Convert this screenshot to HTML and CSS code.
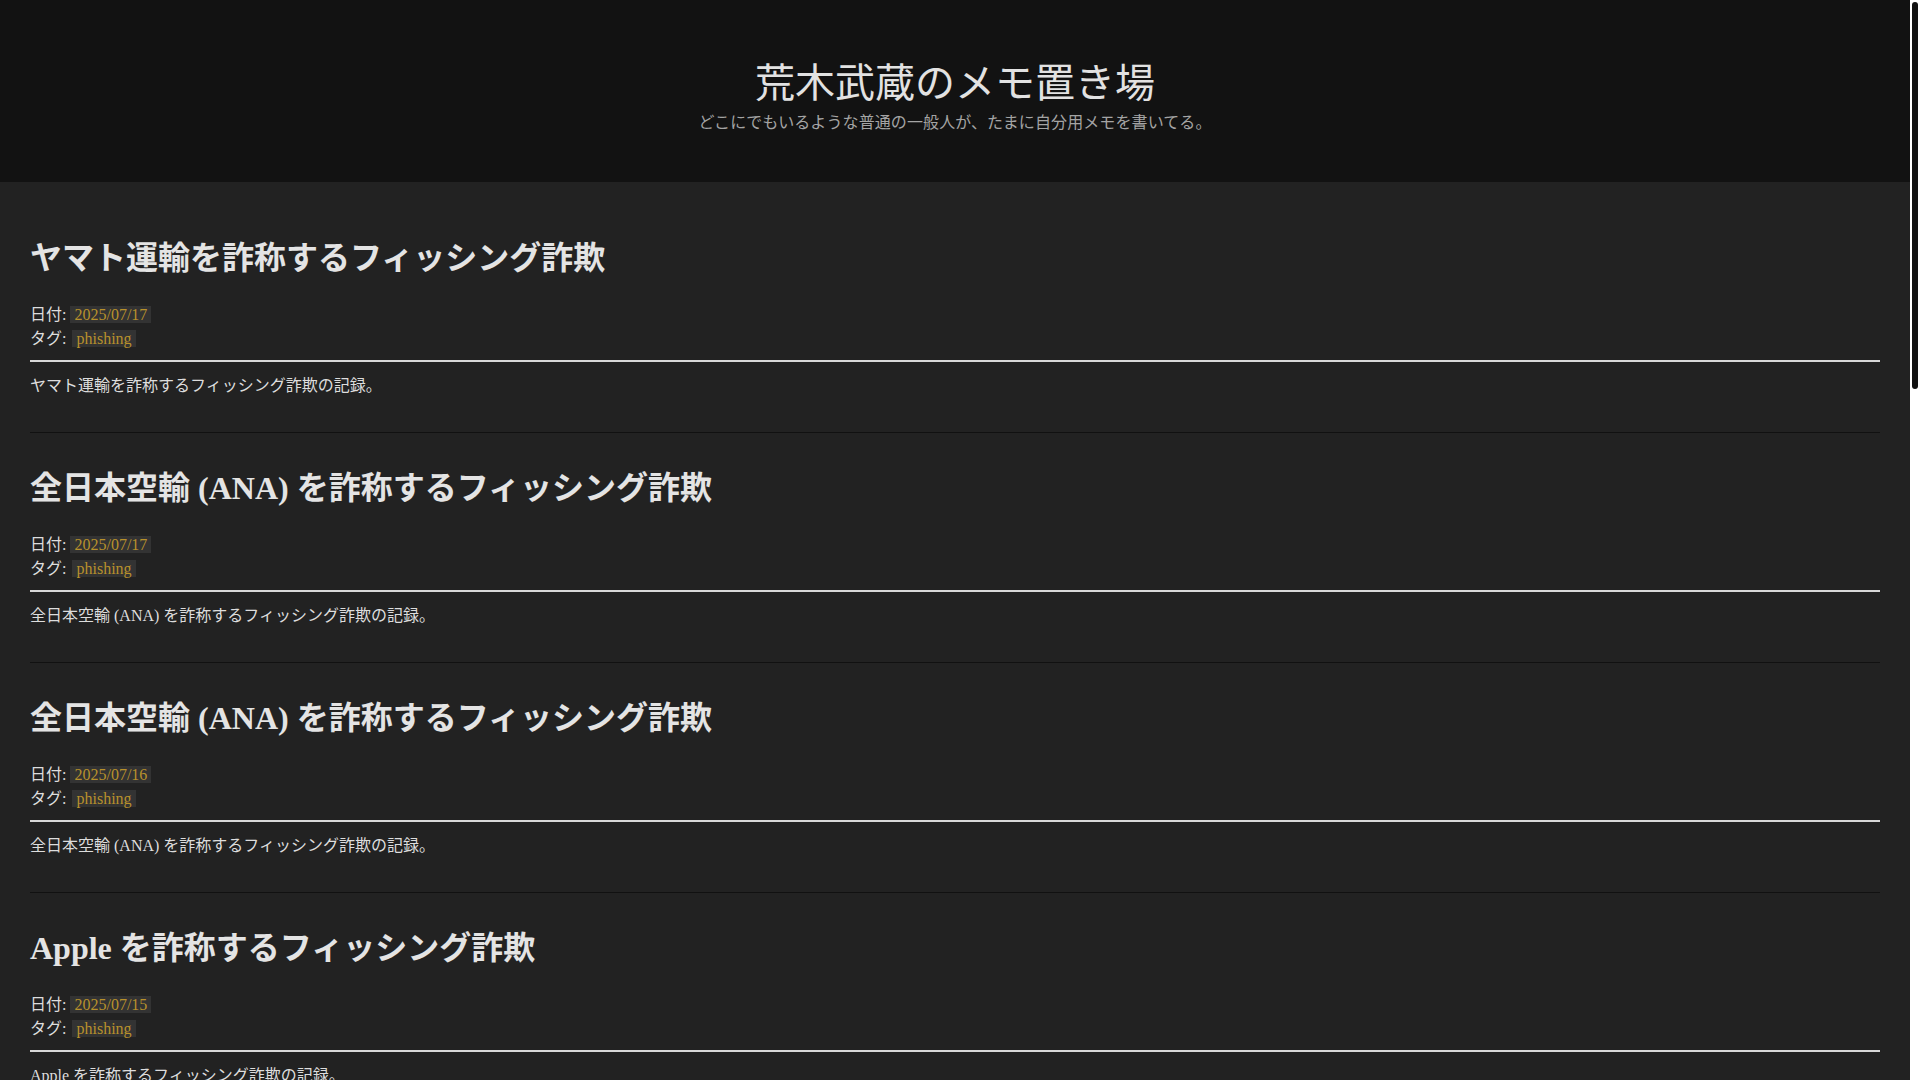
FILE: index.html
```html
<!DOCTYPE html>
<html lang="ja">
<head>
  <meta charset="UTF-8" />
  <meta name="viewport" content="width=device-width, initial-scale=1.0" />
  <title>荒木武蔵のメモ置き場</title>
  <link rel="stylesheet" href="styles.css">
</head>
<body>
  <div class="page">
    <header class="site-header">
      <h1 class="site-title">荒木武蔵のメモ置き場</h1>
      <p class="site-desc">どこにでもいるような普通の一般人が、たまに自分用メモを書いてる。</p>
    </header>

    <main class="posts">
      <article class="post">
        <h2 class="post-title">ヤマト運輸を詐称するフィッシング詐欺</h2>
        <div class="post-meta">
          <div>日付: <span class="code">2025/07/17</span></div>
          <div>タグ: <a class="code tag">phishing</a></div>
        </div>
        <hr>
        <p>ヤマト運輸を詐称するフィッシング詐欺の記録。</p>
      </article>

      <article class="post">
        <h2 class="post-title">全日本空輸 (ANA) を詐称するフィッシング詐欺</h2>
        <div class="post-meta">
          <div>日付: <span class="code">2025/07/17</span></div>
          <div>タグ: <a class="code tag">phishing</a></div>
        </div>
        <hr>
        <p>全日本空輸 (ANA) を詐称するフィッシング詐欺の記録。</p>
      </article>

      <article class="post">
        <h2 class="post-title">全日本空輸 (ANA) を詐称するフィッシング詐欺</h2>
        <div class="post-meta">
          <div>日付: <span class="code">2025/07/16</span></div>
          <div>タグ: <a class="code tag">phishing</a></div>
        </div>
        <hr>
        <p>全日本空輸 (ANA) を詐称するフィッシング詐欺の記録。</p>
      </article>

      <article class="post">
        <h2 class="post-title">Apple を詐称するフィッシング詐欺</h2>
        <div class="post-meta">
          <div>日付: <span class="code">2025/07/15</span></div>
          <div>タグ: <a class="code tag">phishing</a></div>
        </div>
        <hr>
        <p>Apple を詐称するフィッシング詐欺の記録。</p>
      </article>

      <article class="post">
        <h2 class="post-title">Amazon を詐称するフィッシング詐欺</h2>
        <div class="post-meta">
          <div>日付: <span class="code">2025/07/14</span></div>
          <div>タグ: <a class="code tag">phishing</a></div>
        </div>
        <hr>
        <p>Amazon を詐称するフィッシング詐欺の記録。</p>
      </article>

      <article class="post">
        <h2 class="post-title">三井住友カードを詐称するフィッシング詐欺</h2>
        <div class="post-meta">
          <div>日付: <span class="code">2025/07/13</span></div>
          <div>タグ: <a class="code tag">phishing</a></div>
        </div>
        <hr>
        <p>三井住友カードを詐称するフィッシング詐欺の記録。</p>
      </article>

      <article class="post">
        <h2 class="post-title">えきねっとを詐称するフィッシング詐欺</h2>
        <div class="post-meta">
          <div>日付: <span class="code">2025/07/12</span></div>
          <div>タグ: <a class="code tag">phishing</a></div>
        </div>
        <hr>
        <p>えきねっとを詐称するフィッシング詐欺の記録。</p>
      </article>

      <article class="post">
        <h2 class="post-title">日本郵便を詐称するフィッシング詐欺</h2>
        <div class="post-meta">
          <div>日付: <span class="code">2025/07/11</span></div>
          <div>タグ: <a class="code tag">phishing</a></div>
        </div>
        <hr>
        <p>日本郵便を詐称するフィッシング詐欺の記録。</p>
      </article>

      <article class="post">
        <h2 class="post-title">楽天カードを詐称するフィッシング詐欺</h2>
        <div class="post-meta">
          <div>日付: <span class="code">2025/07/10</span></div>
          <div>タグ: <a class="code tag">phishing</a></div>
        </div>
        <hr>
        <p>楽天カードを詐称するフィッシング詐欺の記録。</p>
      </article>

      <article class="post">
        <h2 class="post-title">ETC 利用照会サービスを詐称するフィッシング詐欺</h2>
        <div class="post-meta">
          <div>日付: <span class="code">2025/07/09</span></div>
          <div>タグ: <a class="code tag">phishing</a></div>
        </div>
        <hr>
        <p>ETC 利用照会サービスを詐称するフィッシング詐欺の記録。</p>
      </article>

      <article class="post">
        <h2 class="post-title">メルカリを詐称するフィッシング詐欺</h2>
        <div class="post-meta">
          <div>日付: <span class="code">2025/07/08</span></div>
          <div>タグ: <a class="code tag">phishing</a></div>
        </div>
        <hr>
        <p>メルカリを詐称するフィッシング詐欺の記録。</p>
      </article>

      <article class="post">
        <h2 class="post-title">au を詐称するフィッシング詐欺</h2>
        <div class="post-meta">
          <div>日付: <span class="code">2025/07/07</span></div>
          <div>タグ: <a class="code tag">phishing</a></div>
        </div>
        <hr>
        <p>au を詐称するフィッシング詐欺の記録。</p>
      </article>
    </main>
  </div>

  <!-- scrollbar look (headless hides the real one) -->
  <div class="scrollbar"><div class="scrollbar-thumb"></div></div>
</body>
</html>
```

FILE: styles.css
```css
html {
  background-color: #222;
}
body {
  margin: 0;
  background-color: #222;
  color: #ddd;
  font-family: "Liberation Serif", "Noto Sans CJK JP", serif;
  font-size: 16px;
}
.page {
  margin-right: 10px;
}
/* fake scrollbar on the right edge */
.scrollbar {
  position: fixed;
  top: 0;
  right: 0;
  width: 10px;
  height: 100%;
  background: #fff;
}
.scrollbar-thumb {
  margin: 2px 2px 0;
  height: 387px;
  background: #111;
  border-radius: 3px;
}
/* header */
.site-header {
  background-color: #121212;
  text-align: center;
  padding: 56px 20px 49px;
}
.site-title {
  margin: 0;
  font-size: 40px;
  line-height: 48px;
  font-weight: normal;
  color: #e2e2e2;
  font-family: "Noto Sans CJK JP", sans-serif;
}
.site-desc {
  margin: 5px 0 0;
  font-size: 16px;
  line-height: 24px;
  letter-spacing: 0.1px;
  color: #a4a4a4;
  font-family: "Noto Sans CJK JP", sans-serif;
}
/* posts */
.posts {
  padding: 21px 30px;
}
.post {
  padding: 36px 0 34px;
  border-bottom: 1px solid #111;
}
.post-title {
  margin: 0 0 26px;
  font-size: 32px;
  line-height: 38px;
  font-weight: bold;
  color: #e4e4e4;
}
.post-meta {
  line-height: 24px;
}
.code {
  background-color: #333;
  color: #b8912c;
  padding: 0 4px;
}
.tag {
  margin-left: 2px;
  text-decoration: none;
}
.post hr {
  border: none;
  border-top: 2px solid #d8d8d8;
  margin: 9px 0 12px;
}
.post p {
  margin: 0;
  line-height: 24px;
}
```
